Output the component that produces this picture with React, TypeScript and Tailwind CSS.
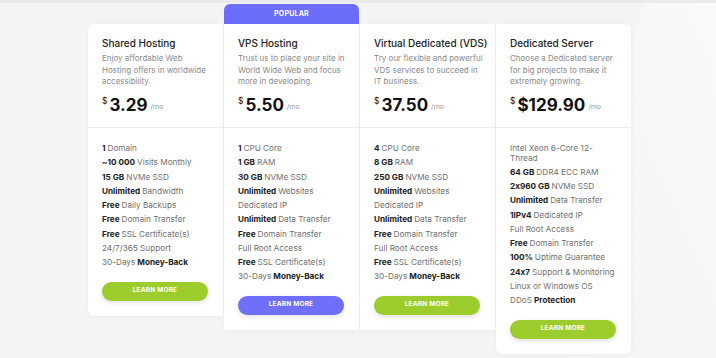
import React from "react";

type Feature = { b?: string; t?: string; b2?: string };

type Plan = {
  title: string;
  desc: string;
  price: string;
  popular?: boolean;
  features: Feature[];
  corner: string;
};

const plans: Plan[] = [
  {
    title: "Shared Hosting",
    desc: "Enjoy affordable Web Hosting offers in worldwide accessibility.",
    price: "3.29",
    corner: "rounded-tl-[6px] rounded-bl-[6px]",
    features: [
      { b: "1", t: "Domain" },
      { b: "~10 000", t: "Visits Monthly" },
      { b: "15 GB", t: "NVMe SSD" },
      { b: "Unlimited", t: "Bandwidth" },
      { b: "Free", t: "Daily Backups" },
      { b: "Free", t: "Domain Transfer" },
      { b: "Free", t: "SSL Certificate(s)" },
      { t: "24/7/365 Support" },
      { t: "30-Days", b2: "Money-Back" },
    ],
  },
  {
    title: "VPS Hosting",
    desc: "Trust us to place your site in World Wide Web and focus more in developing.",
    price: "5.50",
    popular: true,
    corner: "",
    features: [
      { b: "1", t: "CPU Core" },
      { b: "1 GB", t: "RAM" },
      { b: "30 GB", t: "NVMe SSD" },
      { b: "Unlimited", t: "Websites" },
      { t: "Dedicated IP" },
      { b: "Unlimited", t: "Data Transfer" },
      { b: "Free", t: "Domain Transfer" },
      { t: "Full Root Access" },
      { b: "Free", t: "SSL Certificate(s)" },
      { t: "30-Days", b2: "Money-Back" },
    ],
  },
  {
    title: "Virtual Dedicated (VDS)",
    desc: "Try our flexible and powerful VDS services to succeed in IT business.",
    price: "37.50",
    corner: "",
    features: [
      { b: "4", t: "CPU Core" },
      { b: "8 GB", t: "RAM" },
      { b: "250 GB", t: "NVMe SSD" },
      { b: "Unlimited", t: "Websites" },
      { t: "Dedicated IP" },
      { b: "Unlimited", t: "Data Transfer" },
      { b: "Free", t: "Domain Transfer" },
      { t: "Full Root Access" },
      { b: "Free", t: "SSL Certificate(s)" },
      { t: "30-Days", b2: "Money-Back" },
    ],
  },
  {
    title: "Dedicated Server",
    desc: "Choose a Dedicated server for big projects to make it extremely growing.",
    price: "$129.90",
    corner: "rounded-tr-[6px] rounded-b-[6px]",
    features: [
      { t: "Intel Xeon 6-Core 12-Thread" },
      { b: "64 GB", t: "DDR4 ECC RAM" },
      { b: "2x960 GB", t: "NVMe SSD" },
      { b: "Unlimited", t: "Data Transfer" },
      { b: "1IPv4", t: "Dedicated IP" },
      { t: "Full Root Access" },
      { b: "Free", t: "Domain Transfer" },
      { b: "100%", t: "Uptime Guarantee" },
      { b: "24x7", t: "Support & Monitoring" },
      { t: "Linux or Windows OS" },
      { t: "DDoS", b2: "Protection" },
    ],
  },
];

const PlanCard = ({ plan }: { plan: Plan }) => (
  <div className="w-[135px] flex flex-col">
    {plan.popular ? (
      <div className="h-[20px] rounded-t-[6px] bg-[#6d6dfb] flex items-center justify-center text-white text-[7px] font-bold tracking-[0.2px]">
        POPULAR
      </div>
    ) : (
      <div className="h-[20px]" />
    )}
    <div className={`bg-white shadow-[0_1px_6px_rgba(0,0,0,0.04)] ${plan.corner}`}>
      {/* Header */}
      <div className="h-[104px] pl-[14px] pr-[10px] pt-[13px] border-b border-[#efefef]">
        <h3 className="text-[10px] leading-[12px] font-medium text-[#222] whitespace-nowrap">{plan.title}</h3>
        <p className="mt-[4px] text-[8px] leading-[11.5px] text-[#8a8a8a]">{plan.desc}</p>
        <div className="mt-[7px] flex items-start text-[#111]">
          <span className="text-[8.5px] leading-[10px] mt-[1px] mr-[2px]">$</span>
          <span className="text-[17px] leading-[20px] font-bold">{plan.price}</span>
          <span className="text-[7px] leading-[10px] text-[#999] ml-[3px] mt-[7px]">/mo</span>
        </div>
      </div>

      {/* Features */}
      <ul className="px-[14px] pt-[16px] flex flex-col gap-[4.75px] text-[8.2px] leading-[9.5px] text-[#707070]">
        {plan.features.map((f, i) => (
          <li key={i}>
            {f.b && <span className="font-bold text-[#222]">{f.b} </span>}
            {f.t}
            {f.b2 && <span className="font-bold text-[#222]"> {f.b2}</span>}
          </li>
        ))}
      </ul>

      <div className="px-[14px] pt-[14px] pb-[15px]">
        <button
          className={`block w-[106px] h-[19px] rounded-full text-white text-[6.5px] font-bold tracking-[0.2px] shadow-[0_2px_5px_rgba(0,0,0,0.12)] ${
            plan.popular ? "bg-[#6f6ffa]" : "bg-[#9ccd2c]"
          }`}
        >
          LEARN MORE
        </button>
      </div>
    </div>
  </div>
);

export default function App() {
  return (
    <div className="relative w-[716px] h-[358px] overflow-hidden bg-[#f4f4f4] font-['Inter','Noto_Sans',sans-serif] [font-feature-settings:'calt'_0]">
      {/* soft diagonal light in the background */}
      <div className="absolute top-0 right-0 w-[160px] h-[358px] bg-gradient-to-bl from-[#f9f9f9] via-[#f6f6f6] to-[#f4f4f4] [clip-path:polygon(55%_0,100%_0,100%_100%,0_100%)]" />
      <div className="absolute top-0 left-0 w-full h-[3px] bg-[#ebebeb]" />

      <div className="relative flex items-start gap-px pl-[88px] pt-[4px]">
        {plans.map((p) => (
          <PlanCard key={p.title} plan={p} />
        ))}
      </div>
    </div>
  );
}
